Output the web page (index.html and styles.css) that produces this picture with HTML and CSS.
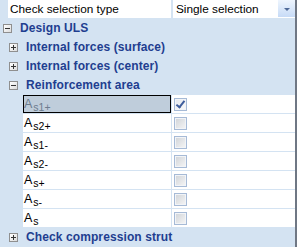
FILE: index.html
```html
<html>
<head>
    <title>Check selection</title>
    <link rel="stylesheet" href="styles.css">
</head>
<body>
<div class="grid">
    <div class="row head">
        <div class="name">Check selection type</div>
        <div class="value">
            <span class="text">Single selection</span>
            <span class="drop"><span class="arrow"></span></span>
        </div>
    </div>
    <div class="row cat lvl0"><span class="exp minus"></span>Design ULS</div>
    <div class="row cat lvl1"><span class="exp plus"></span>Internal forces (surface)</div>
    <div class="row cat lvl1"><span class="exp plus"></span>Internal forces (center)</div>
    <div class="row cat lvl1"><span class="exp minus"></span>Reinforcement area</div>
    <div class="row prop selected">
        <div class="name">A<sub>s1+</sub></div>
        <div class="value"><span class="chk on"></span></div>
    </div>
    <div class="row prop">
        <div class="name">A<sub>s2+</sub></div>
        <div class="value"><span class="chk"></span></div>
    </div>
    <div class="row prop">
        <div class="name">A<sub>s1-</sub></div>
        <div class="value"><span class="chk"></span></div>
    </div>
    <div class="row prop">
        <div class="name">A<sub>s2-</sub></div>
        <div class="value"><span class="chk"></span></div>
    </div>
    <div class="row prop">
        <div class="name">A<sub>s+</sub></div>
        <div class="value"><span class="chk"></span></div>
    </div>
    <div class="row prop">
        <div class="name">A<sub>s-</sub></div>
        <div class="value"><span class="chk"></span></div>
    </div>
    <div class="row prop">
        <div class="name">A<sub>s</sub></div>
        <div class="value"><span class="chk"></span></div>
    </div>
    <div class="row cat lvl1"><span class="exp plus"></span>Check compression strut</div>
</div>
</body>
</html>
```
FILE: styles.css
```css
body {
    margin: 0px;
    background: #ffffff;
    font-family: "Liberation Sans", Arial, sans-serif;
    overflow: hidden;
}

.grid {
    width: 295px;
    height: 247px;
    border-right: 2px solid #6f7784;
    background: #d4e3f2;
    display: flex;
    flex-direction: column;
    gap: 1px;
}

.row {
    height: 18px;
    flex: none;
    display: flex;
    align-items: center;
}

/* header row */
.head {
    padding-left: 8px;
    gap: 1px;
    font-size: 11.8px;
    color: #000;
}

.head .name {
    width: 161px;
    height: 18px;
    background: #fff;
    padding-left: 2px;
    line-height: 18px;
}

.head .value {
    flex: 1;
    height: 18px;
    margin-left: 1px;
    background: #fff;
    display: flex;
    padding-left: 3px;
    line-height: 18px;
}

.head .text {
    flex: 1;
}

.drop {
    width: 17px;
    height: 17px;
    background: linear-gradient(#eef5fe, #c7dbf6);
    display: flex;
    align-items: center;
    justify-content: center;
}

.arrow {
    width: 0;
    height: 0;
    border-left: 3px solid transparent;
    border-right: 3px solid transparent;
    border-top: 3px solid #4f6997;
    margin-top: 1px;
}

/* categories */
.cat {
    font-size: 12px;
    font-weight: bold;
    color: #1f3e90;
    letter-spacing: 0.1px;
}

.lvl0 { padding-left: 3px; }
.lvl1 { padding-left: 9px; }

.exp {
    width: 7px;
    height: 7px;
    border: 1px solid #8f8f8f;
    background: linear-gradient(135deg, #ffffff, #dcdcdc);
    margin-right: 8px;
    position: relative;
}

.exp::before {
    content: "";
    position: absolute;
    left: 1px;
    top: 3px;
    width: 5px;
    height: 1px;
    background: #333;
}

.plus::after {
    content: "";
    position: absolute;
    left: 3px;
    top: 1px;
    width: 1px;
    height: 5px;
    background: #333;
}

/* property rows */
.prop {
    padding-left: 23px;
    gap: 1px;
}

.prop .name {
    width: 148px;
    height: 18px;
    box-sizing: border-box;
    background: #fff;
    font-size: 12.5px;
    line-height: 18px;
    padding-left: 1px;
    color: #000;
}

.prop .name sub {
    font-size: 10.5px;
    vertical-align: -3px;
    margin-left: 1px;
}

.prop .value {
    flex: 1;
    height: 18px;
    background: #fff;
    display: flex;
    align-items: center;
    padding-left: 2px;
}

.selected .name {
    background: #bfcddb;
    border: 1px solid #000;
    color: #6c7c8e;
    line-height: 16px;
    padding-left: 0px;
}

.chk {
    width: 11px;
    height: 11px;
    border: 1px solid #a6bad6;
    background: linear-gradient(135deg, #cfd3d8, #f6f6f6);
    box-shadow: inset 0 0 0 1px #f2f4f7;
    position: relative;
}

.chk.on {
    background: linear-gradient(135deg, #e4e8ee, #fafafa);
}

.chk.on::after {
    content: "";
    position: absolute;
    left: 3px;
    top: 0px;
    width: 3px;
    height: 7px;
    border-right: 2px solid #3e5d9c;
    border-bottom: 2px solid #3e5d9c;
    transform: rotate(38deg);
}
```
